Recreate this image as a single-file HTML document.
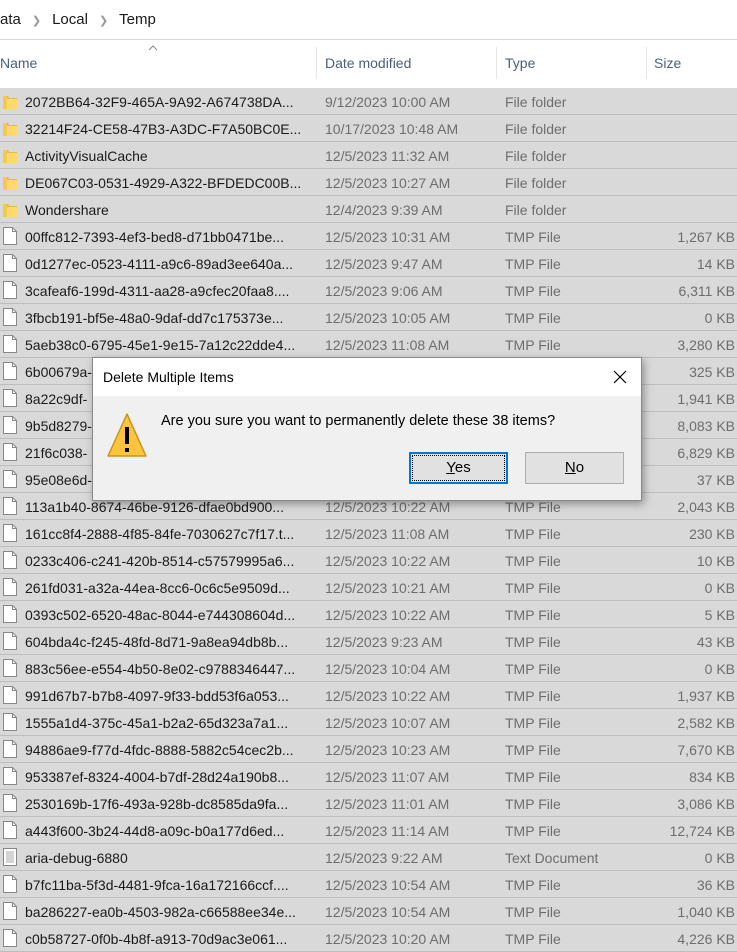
<!DOCTYPE html>
<html><head><meta charset="utf-8"><style>
*{margin:0;padding:0;box-sizing:border-box}
body{width:737px;height:940px;overflow:hidden;background:#fff;font-family:"Liberation Sans",sans-serif;font-size:14px;position:relative}
.bc{position:absolute;top:11px;left:0;font-size:15px;color:#1a1a1a;white-space:nowrap}
.bc span.s{color:#999;font-size:11px;margin:0 11px}
.hl{position:absolute;top:39px;left:0;width:737px;height:1px;background:#d9d9d9}
.hd{position:absolute;top:55px;color:#4c607a;font-size:14px}
.sep{position:absolute;top:47px;width:1px;height:32px;background:#e5e5e5}
.rows{position:absolute;top:88px;left:0;width:737px}
.r{height:27px;background:#d9d9d9;border-bottom:1px solid #bdbdbd;position:relative;white-space:nowrap}
.r span{position:absolute;top:6px}
.n{left:25px;color:#1a1a1a}
.d{left:325px;color:#6d6d6d}
.t{left:505px;color:#6d6d6d}
.z{right:2px;color:#6d6d6d}
.ic{position:absolute;left:2px;top:4px;width:16px;height:18px}
.dlg{position:absolute;left:92px;top:357px;width:550px;height:144px;background:#f0f0f0;border:1px solid #888;box-shadow:2px 3px 8px rgba(0,0,0,.35)}
.tb{height:38px;background:#fff;position:relative}
.btn{position:absolute;top:94px;height:32px;background:#e1e1e1;border:1px solid #adadad;text-align:center;line-height:30px;font-size:15px;color:#000}
</style></head><body>
<div class="bc">ata<span class="s">&#x276F;</span>Local<span class="s">&#x276F;</span>Temp</div>
<div class="hl"></div>
<svg style="position:absolute;left:148px;top:45px" width="10" height="6"><path d="M1 5 L5 1 L9 5" stroke="#888" fill="none"/></svg>
<div class="hd" style="left:0">Name</div>
<div class="sep" style="left:316px"></div><div class="hd" style="left:325px">Date modified</div>
<div class="sep" style="left:496px"></div><div class="hd" style="left:505px">Type</div>
<div class="sep" style="left:646px"></div><div class="hd" style="left:654px">Size</div>

<svg width="0" height="0" style="position:absolute"><defs>
<symbol id="fo" viewBox="0 0 16 18"><path d="M1 4h5l1 2h8v11H1z" fill="#e8b93f"/><path d="M5 7h10v10H5z" fill="#ffd96b"/><path d="M1 4h4v13H1z" fill="#f5c94f"/></symbol>
<symbol id="fi" viewBox="0 0 16 18"><path d="M1.5 0.5h9l4 4v13h-13z" fill="#fff" stroke="#888"/><path d="M10.5 0.5v4h4" fill="none" stroke="#888"/></symbol>
<symbol id="tx" viewBox="0 0 16 18"><path d="M1.5 0.5h13v17h-13z" fill="#fff" stroke="#888"/><path d="M4 4h8M4 6h8M4 8h8M4 10h8M4 12h8M4 14h8" stroke="#aaa"/></symbol>
</defs></svg>

<div class="rows">
<div class="r"><svg class="ic"><use href="#fo"/></svg><span class="n">2072BB64-32F9-465A-9A92-A674738DA...</span><span class="d">9/12/2023 10:00 AM</span><span class="t">File folder</span></div>
<div class="r"><svg class="ic"><use href="#fo"/></svg><span class="n">32214F24-CE58-47B3-A3DC-F7A50BC0E...</span><span class="d">10/17/2023 10:48 AM</span><span class="t">File folder</span></div>
<div class="r"><svg class="ic"><use href="#fo"/></svg><span class="n">ActivityVisualCache</span><span class="d">12/5/2023 11:32 AM</span><span class="t">File folder</span></div>
<div class="r"><svg class="ic"><use href="#fo"/></svg><span class="n">DE067C03-0531-4929-A322-BFDEDC00B...</span><span class="d">12/5/2023 10:27 AM</span><span class="t">File folder</span></div>
<div class="r"><svg class="ic"><use href="#fo"/></svg><span class="n">Wondershare</span><span class="d">12/4/2023 9:39 AM</span><span class="t">File folder</span></div>
<div class="r"><svg class="ic"><use href="#fi"/></svg><span class="n">00ffc812-7393-4ef3-bed8-d71bb0471be...</span><span class="d">12/5/2023 10:31 AM</span><span class="t">TMP File</span><span class="z">1,267 KB</span></div>
<div class="r"><svg class="ic"><use href="#fi"/></svg><span class="n">0d1277ec-0523-4111-a9c6-89ad3ee640a...</span><span class="d">12/5/2023 9:47 AM</span><span class="t">TMP File</span><span class="z">14 KB</span></div>
<div class="r"><svg class="ic"><use href="#fi"/></svg><span class="n">3cafeaf6-199d-4311-aa28-a9cfec20faa8....</span><span class="d">12/5/2023 9:06 AM</span><span class="t">TMP File</span><span class="z">6,311 KB</span></div>
<div class="r"><svg class="ic"><use href="#fi"/></svg><span class="n">3fbcb191-bf5e-48a0-9daf-dd7c175373e...</span><span class="d">12/5/2023 10:05 AM</span><span class="t">TMP File</span><span class="z">0 KB</span></div>
<div class="r"><svg class="ic"><use href="#fi"/></svg><span class="n">5aeb38c0-6795-45e1-9e15-7a12c22dde4...</span><span class="d">12/5/2023 11:08 AM</span><span class="t">TMP File</span><span class="z">3,280 KB</span></div>
<div class="r"><svg class="ic"><use href="#fi"/></svg><span class="n">6b00679a-</span><span class="z">325 KB</span></div>
<div class="r"><svg class="ic"><use href="#fi"/></svg><span class="n">8a22c9df-</span><span class="z">1,941 KB</span></div>
<div class="r"><svg class="ic"><use href="#fi"/></svg><span class="n">9b5d8279-</span><span class="z">8,083 KB</span></div>
<div class="r"><svg class="ic"><use href="#fi"/></svg><span class="n">21f6c038-</span><span class="z">6,829 KB</span></div>
<div class="r"><svg class="ic"><use href="#fi"/></svg><span class="n">95e08e6d-</span><span class="z">37 KB</span></div>
<div class="r"><svg class="ic"><use href="#fi"/></svg><span class="n">113a1b40-8674-46be-9126-dfae0bd900...</span><span class="d">12/5/2023 10:22 AM</span><span class="t">TMP File</span><span class="z">2,043 KB</span></div>
<div class="r"><svg class="ic"><use href="#fi"/></svg><span class="n">161cc8f4-2888-4f85-84fe-7030627c7f17.t...</span><span class="d">12/5/2023 11:08 AM</span><span class="t">TMP File</span><span class="z">230 KB</span></div>
<div class="r"><svg class="ic"><use href="#fi"/></svg><span class="n">0233c406-c241-420b-8514-c57579995a6...</span><span class="d">12/5/2023 10:22 AM</span><span class="t">TMP File</span><span class="z">10 KB</span></div>
<div class="r"><svg class="ic"><use href="#fi"/></svg><span class="n">261fd031-a32a-44ea-8cc6-0c6c5e9509d...</span><span class="d">12/5/2023 10:21 AM</span><span class="t">TMP File</span><span class="z">0 KB</span></div>
<div class="r"><svg class="ic"><use href="#fi"/></svg><span class="n">0393c502-6520-48ac-8044-e744308604d...</span><span class="d">12/5/2023 10:22 AM</span><span class="t">TMP File</span><span class="z">5 KB</span></div>
<div class="r"><svg class="ic"><use href="#fi"/></svg><span class="n">604bda4c-f245-48fd-8d71-9a8ea94db8b...</span><span class="d">12/5/2023 9:23 AM</span><span class="t">TMP File</span><span class="z">43 KB</span></div>
<div class="r"><svg class="ic"><use href="#fi"/></svg><span class="n">883c56ee-e554-4b50-8e02-c9788346447...</span><span class="d">12/5/2023 10:04 AM</span><span class="t">TMP File</span><span class="z">0 KB</span></div>
<div class="r"><svg class="ic"><use href="#fi"/></svg><span class="n">991d67b7-b7b8-4097-9f33-bdd53f6a053...</span><span class="d">12/5/2023 10:22 AM</span><span class="t">TMP File</span><span class="z">1,937 KB</span></div>
<div class="r"><svg class="ic"><use href="#fi"/></svg><span class="n">1555a1d4-375c-45a1-b2a2-65d323a7a1...</span><span class="d">12/5/2023 10:07 AM</span><span class="t">TMP File</span><span class="z">2,582 KB</span></div>
<div class="r"><svg class="ic"><use href="#fi"/></svg><span class="n">94886ae9-f77d-4fdc-8888-5882c54cec2b...</span><span class="d">12/5/2023 10:23 AM</span><span class="t">TMP File</span><span class="z">7,670 KB</span></div>
<div class="r"><svg class="ic"><use href="#fi"/></svg><span class="n">953387ef-8324-4004-b7df-28d24a190b8...</span><span class="d">12/5/2023 11:07 AM</span><span class="t">TMP File</span><span class="z">834 KB</span></div>
<div class="r"><svg class="ic"><use href="#fi"/></svg><span class="n">2530169b-17f6-493a-928b-dc8585da9fa...</span><span class="d">12/5/2023 11:01 AM</span><span class="t">TMP File</span><span class="z">3,086 KB</span></div>
<div class="r"><svg class="ic"><use href="#fi"/></svg><span class="n">a443f600-3b24-44d8-a09c-b0a177d6ed...</span><span class="d">12/5/2023 11:14 AM</span><span class="t">TMP File</span><span class="z">12,724 KB</span></div>
<div class="r"><svg class="ic"><use href="#tx"/></svg><span class="n">aria-debug-6880</span><span class="d">12/5/2023 9:22 AM</span><span class="t">Text Document</span><span class="z">0 KB</span></div>
<div class="r"><svg class="ic"><use href="#fi"/></svg><span class="n">b7fc11ba-5f3d-4481-9fca-16a172166ccf....</span><span class="d">12/5/2023 10:54 AM</span><span class="t">TMP File</span><span class="z">36 KB</span></div>
<div class="r"><svg class="ic"><use href="#fi"/></svg><span class="n">ba286227-ea0b-4503-982a-c66588ee34e...</span><span class="d">12/5/2023 10:54 AM</span><span class="t">TMP File</span><span class="z">1,040 KB</span></div>
<div class="r"><svg class="ic"><use href="#fi"/></svg><span class="n">c0b58727-0f0b-4b8f-a913-70d9ac3e061...</span><span class="d">12/5/2023 10:20 AM</span><span class="t">TMP File</span><span class="z">4,226 KB</span></div>
</div>

<div class="dlg">
<div class="tb"><span style="position:absolute;left:10px;top:11px;font-size:14px;color:#000">Delete Multiple Items</span>
<svg style="position:absolute;left:520px;top:12px" width="14" height="14"><path d="M1 1L13 13M13 1L1 13" stroke="#000" stroke-width="1.2"/></svg></div>
<svg style="position:absolute;left:13px;top:53px" width="42" height="48" viewBox="0 0 42 48"><path d="M21 3 L40 45 L2 45 Z" fill="#fcc43c" stroke="#c7951f" stroke-width="1.5" stroke-linejoin="round"/><rect x="19" y="16" width="4" height="17" fill="#000"/><rect x="19" y="37" width="4" height="4" fill="#000"/></svg>
<span style="position:absolute;left:68px;top:55px;font-size:14.5px;color:#000">Are you sure you want to permanently delete these 38 items?</span>
<div class="btn" style="left:316px;width:99px;border:2px solid #0078d7;line-height:28px"><div style="position:absolute;inset:1px;border:1px dotted #000"></div><u>Y</u>es</div>
<div class="btn" style="left:432px;width:99px"><u>N</u>o</div>
</div>
</body></html>
